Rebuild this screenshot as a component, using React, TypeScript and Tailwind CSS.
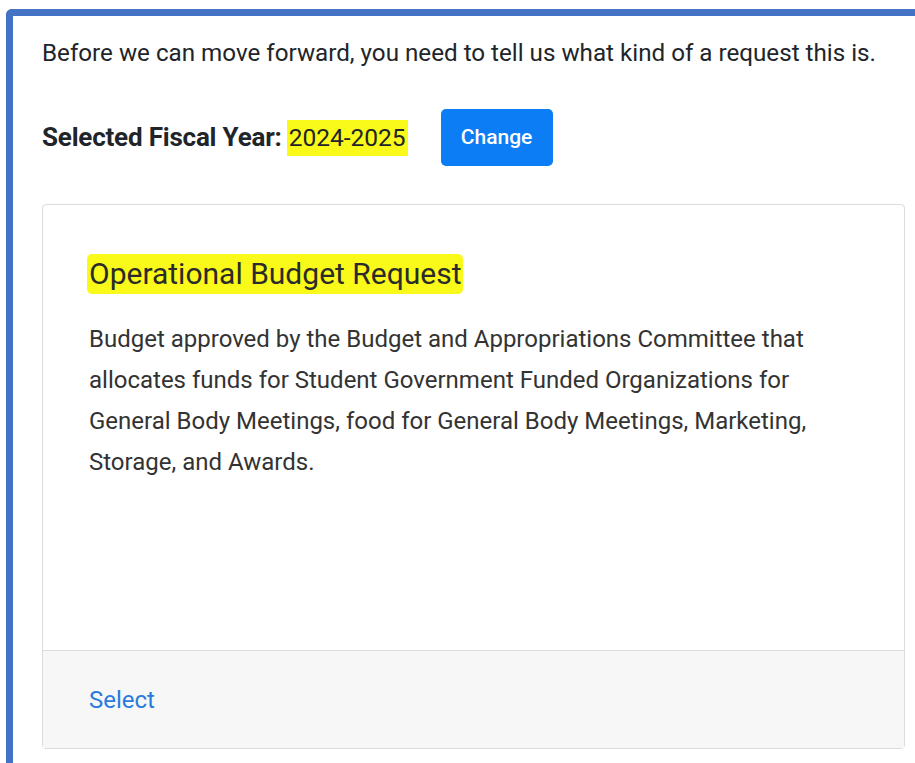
export default function App() {
  return (
    <div className="min-h-[763px] bg-white" style={{ fontFamily: 'Roboto, "Liberation Sans", sans-serif' }}>
      <div className="ml-[6px] mt-[9px] min-h-[754px] rounded-tl-[6px] border-l-[7px] border-t-[7px] border-[#4472c4] pl-[29px] pt-[23px]">
        <p className="text-[24.2px] leading-[28px] text-[#212529]">
          Before we can move forward, you need to tell us what kind of a request this is.
        </p>

        <div className="mt-[42px] flex items-center">
          <span className="text-[26px] font-bold tracking-[-0.2px] text-[#212529]">Selected Fiscal Year:</span>
          <span className="ml-[5px] bg-[#f9f91a] px-[2px] py-[3px] text-[24.5px] leading-[30px] text-[#212529]">2024-2025</span>
          <button className="ml-[33px] h-[57px] w-[112px] rounded-[5px] bg-[#0c7df5] text-[21px] font-medium text-white">
            Change
          </button>
        </div>

        <div className="mr-[10px] mt-[38px] flex h-[545px] flex-col rounded-[4px] border border-[#dcdcdc]">
          <div className="flex-1 px-[46px] pt-[49px]">
            <h2 className="-ml-[2px] inline-block rounded-[5px] bg-[#f9f91a] px-[2px] text-[30px] leading-[40px] text-[#2b2b2b]">
              Operational Budget Request
            </h2>
            <p className="mt-[25px] max-w-[728px] text-[24px] leading-[41px] text-[#333]">
              Budget approved by the Budget and Appropriations Committee that allocates funds for Student Government Funded Organizations for General Body Meetings, food for General Body Meetings, Marketing, Storage, and Awards.
            </p>
          </div>
          <div className="flex h-[98px] items-center border-t border-[#dcdcdc] bg-[#f7f7f7] px-[46px]">
            <span className="text-[24px] text-[#2a7bdc]">Select</span>
          </div>
        </div>
      </div>
    </div>
  );
}
